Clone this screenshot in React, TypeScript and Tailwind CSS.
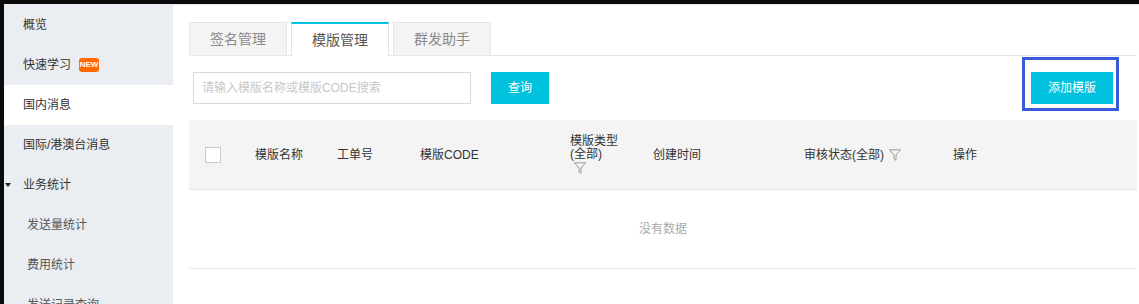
import React from "react";

const FONT = { fontFamily: '"Liberation Sans", "Noto Sans CJK SC", sans-serif' };

function Funnel({ className }: { className?: string }) {
  return (
    <svg className={className} width="12" height="12" viewBox="0 0 12 12" fill="none">
      <path d="M0.5 0.8 H11.5 L7 6 V11.3 L5 10 V6 Z" stroke="#9a9a9a" strokeWidth="1" strokeLinejoin="round" fill="none" />
    </svg>
  );
}

function SideItem({ label, active, sub, children }: { label: string; active?: boolean; sub?: boolean; children?: React.ReactNode }) {
  return (
    <div className={`relative h-[40px] flex items-center text-[12px] ${sub ? "pl-[23px] text-[#555]" : "pl-[19px] text-[#333]"} ${active ? "bg-white" : ""}`}>
      <span>{label}</span>
      {children}
    </div>
  );
}

export default function App() {
  return (
    <div className="w-[1139px] h-[304px] overflow-hidden bg-[#0b0b0b] pt-[4px] pl-[4px]" style={FONT}>
      <div className="flex h-[300px]">
        {/* Sidebar */}
        <div className="w-[169px] shrink-0 bg-[#eaedf1] pt-[1px] overflow-hidden">
          <SideItem label="概览" />
          <SideItem label="快速学习">
            <span className="ml-[8px] h-[14px] w-[20px] rounded-[3px] bg-[#ff6a00] text-white text-[8px] font-bold flex items-center justify-center leading-none">NEW</span>
          </SideItem>
          <SideItem label="国内消息" active />
          <SideItem label="国际/港澳台消息" />
          <SideItem label="业务统计">
            <span className="absolute left-[1px] top-[18px] w-0 h-0 border-l-[3.5px] border-r-[3.5px] border-t-[4px] border-l-transparent border-r-transparent border-t-[#222]" />
          </SideItem>
          <SideItem label="发送量统计" sub />
          <SideItem label="费用统计" sub />
          <SideItem label="发送记录查询" sub />
        </div>

        {/* Main */}
        <div className="flex-1 bg-white border-t border-[#e6e6e6] pt-[17px] pl-[16px] pr-[2px]">
          {/* Tabs */}
          <div className="flex h-[34px] border-b border-[#e5e5e5] text-[14px]">
            <div className="w-[98px] h-[34px] flex items-center justify-center bg-[#f4f4f4] border border-[#e5e5e5] text-[#8a8a8a]">签名管理</div>
            <div className="ml-[4px] w-[98px] h-[34px] flex items-center justify-center bg-white border-t-2 border-t-[#00c1de] border-x border-x-[#e5e5e5] text-[#555] relative top-0 -mb-px">模版管理</div>
            <div className="ml-[4px] w-[98px] h-[34px] flex items-center justify-center bg-[#f4f4f4] border border-[#e5e5e5] text-[#8a8a8a]">群发助手</div>
          </div>

          {/* Search row */}
          <div className="mt-[16px] flex items-center justify-between pl-[4px] pr-[24px]">
            <div className="flex items-center">
              <div className="w-[278px] h-[32px] border border-[#d9d9d9] flex items-center pl-[8px] text-[12px] text-[#c8c8c8]">请输入模版名称或模版CODE搜索</div>
              <div className="ml-[20px] w-[58px] h-[32px] bg-[#00c1de] text-white text-[12px] flex items-center justify-center">查询</div>
            </div>
            <div className="relative w-[82px] h-[32px] bg-[#00c1de] text-white text-[12px] flex items-center justify-center">
              添加模版
              <div className="absolute -left-[9px] -right-[6px] -top-[15px] -bottom-[7px] border-[3px] border-[#3a5bd9]" />
            </div>
          </div>

          {/* Table */}
          <div className="mt-[16px]">
            <div className="h-[70px] bg-[#f4f4f4] border-b border-[#e8e8e8] flex items-center text-[12px] text-[#333]">
              <div className="w-[50px] pl-[16px] flex items-center">
                <div className="w-[16px] h-[16px] bg-white border border-[#c9c9c9]" />
              </div>
              <div className="w-[82px] pl-[16px]">模版名称</div>
              <div className="w-[83px] pl-[16px]">工单号</div>
              <div className="w-[150px] pl-[16px]">模版CODE</div>
              <div className="w-[83px] pl-[16px] leading-[13px]">
                <div>模版类型</div>
                <div>(全部)</div>
                <Funnel className="mt-[1px] ml-[4px]" />
              </div>
              <div className="w-[151px] pl-[16px]">创建时间</div>
              <div className="w-[149px] pl-[16px] flex items-center">
                <span>审核状态(全部)</span>
                <Funnel className="ml-[5px]" />
              </div>
              <div className="flex-1 pl-[16px]">操作</div>
            </div>
            <div className="h-[79px] border-b border-[#e8e8e8] flex items-center justify-center text-[12px] text-[#aaa]">没有数据</div>
          </div>
        </div>
      </div>
    </div>
  );
}
